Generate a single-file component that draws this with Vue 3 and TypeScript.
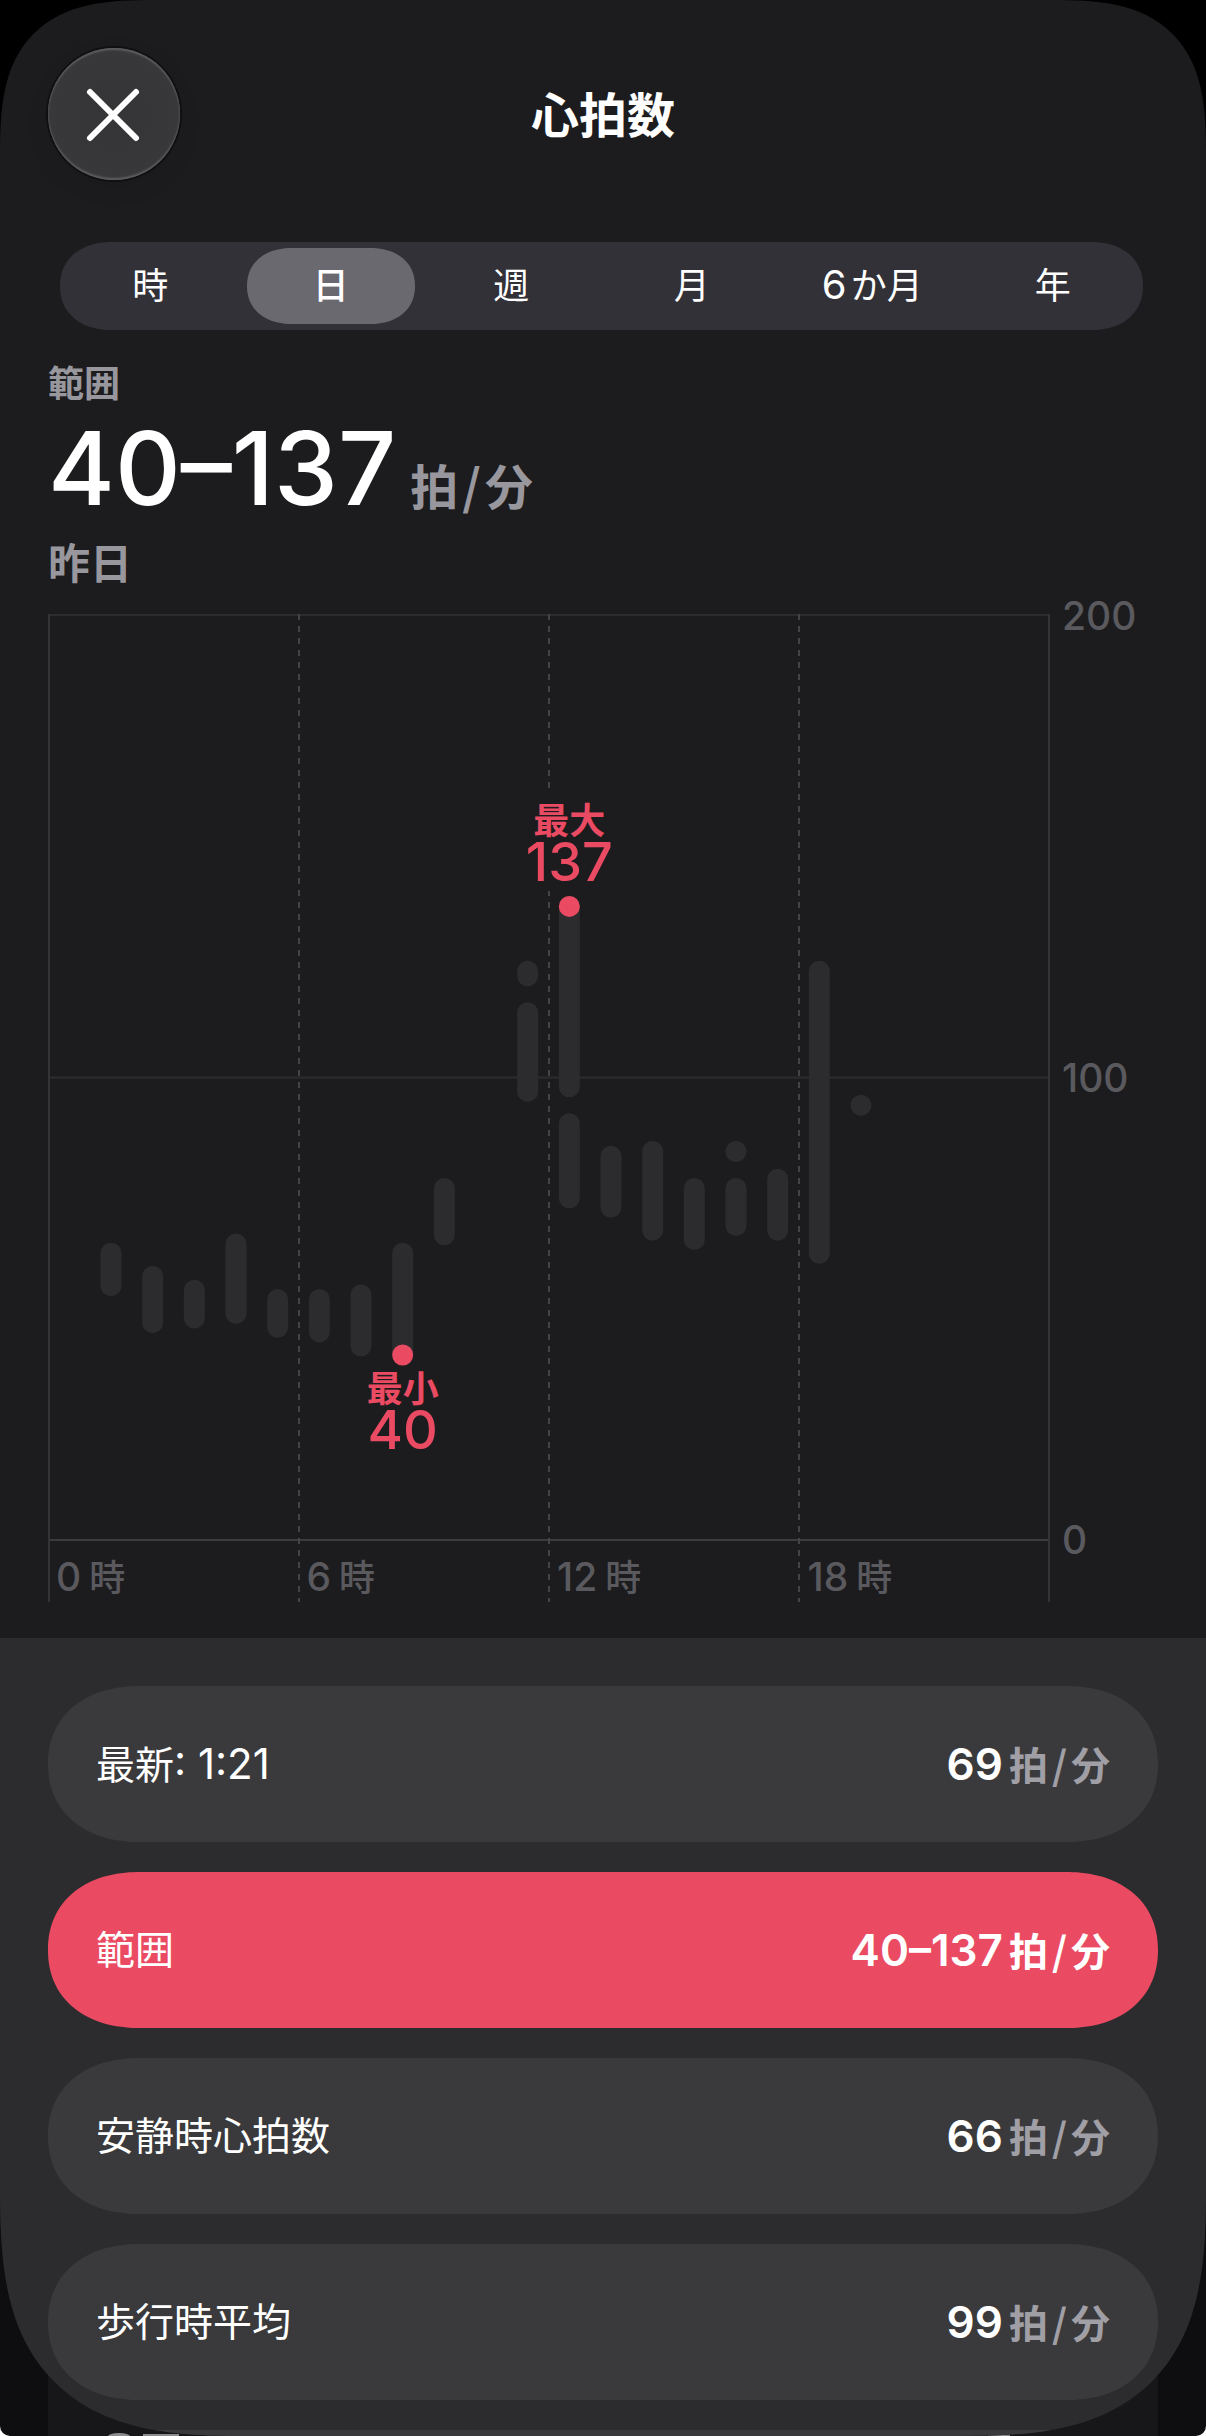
<script setup lang="ts">
import { computed, ref } from 'vue'

interface Segment {
  hour: number
  low: number
  high: number
}

interface Period {
  id: string
  count?: number
  unit: string
}

interface Reading {
  id: string
  label: string
  time?: string
  value: string
}

const periods: Period[] = [
  { id: 'hour', unit: '時' },
  { id: 'day', unit: '日' },
  { id: 'week', unit: '週' },
  { id: 'month', unit: '月' },
  { id: 'half', count: 6, unit: 'か月' },
  { id: 'year', unit: '年' },
]
const period = ref('day')

const readings: Reading[] = [
  { id: 'latest', label: '最新', time: ': 1:21', value: '69' },
  { id: 'range', label: '範囲', value: '40–137' },
  { id: 'resting', label: '安静時心拍数', value: '66' },
  { id: 'walking', label: '歩行時平均', value: '99' },
]
const selected = ref('range')

const segments: Segment[] = [
  { hour: 1, low: 55, high: 62 },
  { hour: 2, low: 47, high: 57 },
  { hour: 3, low: 48, high: 54 },
  { hour: 4, low: 49, high: 64 },
  { hour: 5, low: 46, high: 52 },
  { hour: 6, low: 45, high: 52 },
  { hour: 7, low: 42, high: 53 },
  { hour: 8, low: 40, high: 62 },
  { hour: 9, low: 66, high: 76 },
  { hour: 11, low: 122, high: 123 },
  { hour: 11, low: 97, high: 114 },
  { hour: 12, low: 98, high: 137 },
  { hour: 12, low: 74, high: 90 },
  { hour: 13, low: 72, high: 83 },
  { hour: 14, low: 67, high: 84 },
  { hour: 15, low: 65, high: 76 },
  { hour: 16, low: 84, high: 84 },
  { hour: 16, low: 68, high: 76 },
  { hour: 17, low: 67, high: 78 },
  { hour: 18, low: 62, high: 123 },
  { hour: 19, low: 94, high: 94 },
]

// Chart geometry, in viewBox units
const W = 1002
const H = 988
const PLOT_TOP = 1
const PLOT_BOTTOM = 926
const BAR = 21

const gridX = (hour: number) => 1 + (hour * (W - 2)) / 24
const x = (hour: number) => gridX(hour + 0.5) - 0.5
const y = (bpm: number) => PLOT_BOTTOM - (bpm * (PLOT_BOTTOM - PLOT_TOP)) / 200

const bars = computed(() =>
  segments.map((s) => ({
    x: x(s.hour) - BAR / 2,
    y: y(s.high) - BAR / 2,
    h: y(s.low) - y(s.high) + BAR,
  })),
)
const extremes = [
  { kind: 'max', label: '最大', bpm: 137, hour: 12 },
  { kind: 'min', label: '最小', bpm: 40, hour: 8 },
]
const hourTicks = [0, 6, 12, 18]
const bpmTicks = [200, 100, 0]
const pctX = (v: number) => `${(v / W) * 100}%`
const pctY = (v: number) => `${(v / H) * 100}%`
</script>

<template>
  <div class="backdrop">
    <div class="under" aria-hidden="true">
      <span class="peek round"></span>
      <span class="peek flat"></span>
      <span class="peek last"></span>
    </div>
    <main class="sheet">
      <header class="header">
        <button class="close" type="button" aria-label="閉じる">
          <svg viewBox="0 0 132 132" aria-hidden="true">
            <path d="M42 44 L88 90 M88 44 L42 90" />
          </svg>
        </button>
        <h1 class="title">心拍数</h1>
      </header>

      <nav class="periods" aria-label="期間">
        <button
          v-for="p in periods"
          :key="p.id"
          type="button"
          class="period"
          :class="{ active: p.id === period }"
          :aria-pressed="p.id === period"
          @click="period = p.id"
        >
          <span v-if="p.count" class="count">{{ p.count }}</span>{{ p.unit }}
        </button>
      </nav>

      <section class="summary">
        <p class="summary-label">範囲</p>
        <p class="summary-value">
          <strong>40–137</strong>
          <span class="unit">拍<i>/</i>分</span>
        </p>
        <p class="summary-date">昨日</p>
      </section>

      <section class="chart" aria-label="心拍数のグラフ">
        <div class="plot">
          <svg class="plot-svg" :viewBox="`0 0 ${W} ${H}`" aria-hidden="true">
            <path class="line faint" :d="`M0 ${y(200)} H${W} M0 ${y(100)} H${W}`" />
            <path class="line" :d="`M0 ${y(0)} H${W}`" />
            <path class="line thin" :d="`M1 0 V${H} M${W - 1} 0 V${H}`" />
            <path
              v-for="t in [6, 12, 18]"
              :key="t"
              class="line dashed"
              :d="`M${gridX(t)} 0 V${H}`"
            />
            <rect
              v-for="(b, i) in bars"
              :key="i"
              class="bar"
              :x="b.x"
              :y="b.y"
              :width="BAR"
              :height="b.h"
              :rx="BAR / 2"
            />
            <circle
              v-for="e in extremes"
              :key="e.kind"
              class="dot"
              :cx="x(e.hour)"
              :cy="y(e.bpm)"
              :r="BAR / 2"
            />
          </svg>
          <div
            v-for="e in extremes"
            :key="e.kind"
            class="extreme"
            :class="e.kind"
            :style="{ left: pctX(x(e.hour)), top: pctY(y(e.bpm)) }"
          >
            <span>{{ e.label }}</span>
            <b>{{ e.bpm }}</b>
          </div>
          <div class="hours">
            <span v-for="t in hourTicks" :key="t">{{ t }}<em>時</em></span>
          </div>
        </div>
        <div class="bpm-axis">
          <span v-for="t in bpmTicks" :key="t">{{ t }}</span>
        </div>
      </section>

      <section class="readings">
        <button
          v-for="r in readings"
          :key="r.id"
          type="button"
          class="reading"
          :class="{ active: r.id === selected }"
          :aria-pressed="r.id === selected"
          @click="selected = r.id"
        >
          <span>{{ r.label }}<span v-if="r.time" class="time">{{ r.time }}</span></span>
          <span class="reading-value">
            <b>{{ r.value }}</b>
            <span class="unit">拍<i>/</i>分</span>
          </span>
        </button>
        <div class="reading"></div>
      </section>
    </main>
  </div>
</template>

<style>
body {
  margin: 0;
  background: #fff;
}
</style>

<style scoped>
.backdrop {
  position: relative;
  height: 100vh;
  overflow: hidden;
  border-radius: 0 0 10px 10px;
  background: linear-gradient(#000 50%, #0e0e10 50%);
  color: #fff;
  font-family: Inter, 'Noto Sans CJK JP', sans-serif;
}
.under {
  position: absolute;
  inset: 50% 48px 0;
  display: flex;
  align-items: flex-end;
  padding: 0 148px 0 60px;
  background: #17171a;
}
.peek {
  width: 22px;
  height: 3px;
  background: #8c8c8e;
}
.peek.round {
  border-radius: 50% 50% 0 0 / 100% 100% 0 0;
}
.peek.flat {
  width: 36px;
  height: 2px;
  margin-left: 13px;
}
.peek.last {
  height: 2px;
  margin-left: auto;
}
.sheet {
  position: relative;
  display: flex;
  flex-direction: column;
  height: 100%;
  overflow: hidden;
  border-radius: 115px 115px 184px 184px;
  background: #1c1c1e;
}
button {
  border: 0;
  padding: 0;
  margin: 0;
  color: inherit;
  font: inherit;
}
p,
h1 {
  margin: 0;
}

.header {
  flex: none;
  display: grid;
  grid-template-columns: 1fr auto 1fr;
  align-items: center;
  padding: 48px 48px 62px;
}
.close {
  width: 132px;
  height: 132px;
  border-radius: 50%;
  background: radial-gradient(#363638 40%, #3b3b3e);
  box-shadow:
    0 0 0 2px #101011,
    inset 0 2px 2px #5e5e62,
    inset 0 -2px 2px #5e5e62,
    0 8px 24px rgba(0, 0, 0, 0.08);
}
.close svg {
  display: block;
  fill: none;
  stroke: #fff;
  stroke-width: 6;
  stroke-linecap: round;
}
.title {
  padding-top: 4px;
  font-size: 48px;
  line-height: 64px;
  font-weight: 600;
}

.periods {
  flex: none;
  display: flex;
  height: 88px;
  margin: 0 63px 0 60px;
  border-radius: 50px / 44px;
  background: #323137;
}
.period {
  flex: 1 1 0;
  margin: 6px;
  padding-bottom: 1px;
  border-radius: 44px / 38px;
  background: none;
  font-size: 36px;
  line-height: 48px;
  white-space: nowrap;
}
.period.active {
  background: #6a696f;
  font-weight: 500;
}
.period .count {
  margin-right: 4px;
  font-size: 40px;
}

.summary {
  flex: none;
  padding: 30px 48px 20px;
  color: #98979e;
  font-weight: 600;
}
.summary-label {
  font-size: 36px;
  line-height: 48px;
}
.summary-value {
  display: flex;
  align-items: baseline;
  gap: 14px;
  margin-bottom: 6px;
  font-size: 48px;
  line-height: 48px;
}
.summary-value strong {
  color: #fff;
  font-size: 102px;
  line-height: 120px;
  font-weight: 500;
}
.summary-date {
  font-size: 42px;
  line-height: 60px;
}
.unit i {
  margin: 0 4px;
  font-family: 'Noto Sans CJK JP', sans-serif;
  font-style: normal;
}

.chart {
  flex: none;
  display: grid;
  grid-template-columns: 1fr 110px;
  padding: 0 46px 36px 48px;
}
.plot {
  position: relative;
  display: grid;
}
.plot > .plot-svg,
.plot > .hours {
  grid-area: 1 / 1;
}
.plot-svg {
  display: block;
  width: 100%;
}
.line {
  fill: none;
  stroke: #3c3c3f;
  stroke-width: 2;
}
.faint {
  stroke: #2c2c2e;
}
.thin {
  stroke: #343437;
}
.dashed {
  stroke: #444447;
  stroke-dasharray: 6 6;
}
.bar {
  fill: #2c2c2e;
}
.dot {
  fill: #ea4b62;
}
.extreme {
  position: absolute;
  display: flex;
  flex-direction: column;
  align-items: center;
  color: #ea4b62;
  font-size: 36px;
  line-height: 36px;
  font-weight: 600;
  background: #1c1c1e;
}
.extreme b {
  font-size: 54px;
  line-height: 46px;
  font-weight: 500;
}
.extreme.max {
  padding: 12px 0 6px;
  transform: translate(-50%, -100%) translateY(-15px);
}
.extreme.min {
  transform: translate(-50%, 16px);
}
.hours {
  position: relative;
  align-self: end;
  display: grid;
  grid-template-columns: repeat(4, 1fr);
  color: #5a5a5e;
  font-size: 39px;
  line-height: 48px;
  font-weight: 500;
}
.hours span {
  padding-left: 8px;
}
.hours em {
  margin-left: 8px;
  font-size: 36px;
  font-style: normal;
}
.bpm-axis {
  display: flex;
  flex-direction: column;
  justify-content: space-between;
  margin: -22px 0 38px;
  padding-left: 12px;
  color: #5a5a5e;
  font-size: 39px;
  line-height: 48px;
  font-weight: 500;
}

.readings {
  flex: 1 0 auto;
  display: flex;
  flex-direction: column;
  gap: 30px;
  padding: 48px 48px 0;
  background: #2c2c2e;
}
.reading {
  display: flex;
  align-items: center;
  justify-content: space-between;
  height: 156px;
  padding: 0 48px;
  border-radius: 84px / 78px;
  background: #3a3a3c;
  font-size: 39px;
  line-height: 56px;
}
.reading.active {
  background: #ea4b62;
}
.reading .time {
  font-size: 42px;
}
.reading-value {
  display: flex;
  align-items: baseline;
  gap: 6px;
  font-weight: 600;
}
.reading-value b {
  font-size: 44px;
  font-weight: 600;
}
.reading .unit {
  color: #a09fa6;
}
.reading.active .unit {
  color: inherit;
}

/* Continuous corners where the browser can draw them */
@supports (corner-shape: squircle) {
  .sheet {
    border-radius: 155px 155px 250px 250px;
    corner-shape: superellipse(1.5);
  }
  .reading {
    border-radius: 92px / 78px;
    corner-shape: superellipse(1.14);
  }
  .periods {
    border-radius: 52px / 44px;
    corner-shape: superellipse(1.14);
  }
  .period {
    border-radius: 45px / 38px;
    corner-shape: superellipse(1.14);
  }
}
</style>
